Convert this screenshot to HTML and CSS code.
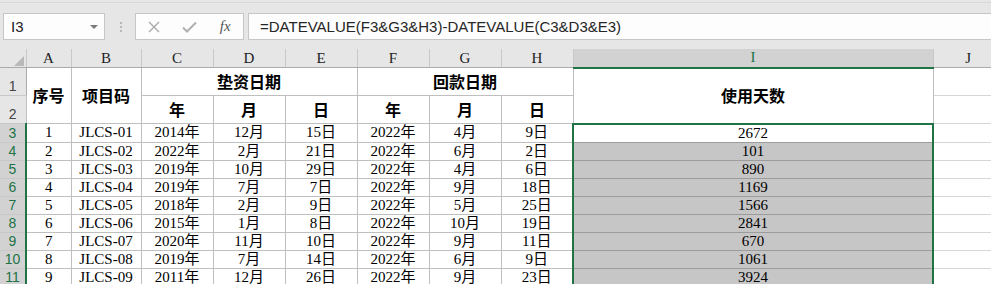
FILE: index.html
```html
<!DOCTYPE html>
<html lang="zh-CN">
<head>
  <meta charset="UTF-8" />
  <title>使用天数</title>
  <link rel="stylesheet" href="styles.css">
</head>
<body>
  <div class="toolbar">
    <div class="namebox">
      <span class="ref">I3</span>
      <span class="caret"></span>
    </div>
    <div class="grip"></div>
    <div class="fxbtns">
      <span class="btn">
        <svg width="12" height="12" viewBox="0 0 12 12"><path d="M1 1L11 11M11 1L1 11" stroke="#a8a8a8" stroke-width="1.3" fill="none"/></svg>
      </span>
      <span class="btn">
        <svg width="15" height="12" viewBox="0 0 15 12"><path d="M1 6.5L5 10.5L14 1.5" stroke="#b0b0b0" stroke-width="2" fill="none"/></svg>
      </span>
      <span class="btn fx">fx</span>
    </div>
    <div class="formula">=DATEVALUE(F3&amp;G3&amp;H3)-DATEVALUE(C3&amp;D3&amp;E3)</div>
  </div>

  <table class="sheet">
    <colgroup>
      <col class="c-rh"><col class="c-a"><col class="c-b">
      <col class="c-d"><col class="c-d"><col class="c-d">
      <col class="c-d"><col class="c-d"><col class="c-d">
      <col class="c-i"><col class="c-j">
    </colgroup>
    <thead>
      <tr>
        <th class="corner"><svg width="10" height="10" viewBox="0 0 10 10"><polygon points="10,0 10,10 0,10" fill="#b9b9b9"/></svg></th>
        <th>A</th><th>B</th><th>C</th><th>D</th><th>E</th>
        <th>F</th><th>G</th><th>H</th><th class="on">I</th><th class="last">J</th>
      </tr>
    </thead>
    <tbody>
      <tr class="tall">
        <th class="rh">1</th>
        <td class="hd" rowspan="2">序号</td>
        <td class="hd" rowspan="2">项目码</td>
        <td class="hd" colspan="3">垫资日期</td>
        <td class="hd" colspan="3">回款日期</td>
        <td class="hd" rowspan="2">使用天数</td>
        <td class="blank"></td>
      </tr>
      <tr class="tall">
        <th class="rh">2</th>
        <td class="hd">年</td><td class="hd">月</td><td class="hd">日</td>
        <td class="hd">年</td><td class="hd">月</td><td class="hd">日</td>
        <td class="blank"></td>
      </tr>
      <tr>
        <th class="rh on">3</th>
        <td>1</td><td>JLCS-01</td><td>2014年</td><td>12月</td><td>15日</td>
        <td>2022年</td><td>4月</td><td>9日</td>
        <td class="days active">2672</td><td class="blank"></td>
      </tr>
      <tr>
        <th class="rh on">4</th>
        <td>2</td><td>JLCS-02</td><td>2022年</td><td>2月</td><td>21日</td>
        <td>2022年</td><td>6月</td><td>2日</td>
        <td class="days">101</td><td class="blank"></td>
      </tr>
      <tr>
        <th class="rh on">5</th>
        <td>3</td><td>JLCS-03</td><td>2019年</td><td>10月</td><td>29日</td>
        <td>2022年</td><td>4月</td><td>6日</td>
        <td class="days">890</td><td class="blank"></td>
      </tr>
      <tr>
        <th class="rh on">6</th>
        <td>4</td><td>JLCS-04</td><td>2019年</td><td>7月</td><td>7日</td>
        <td>2022年</td><td>9月</td><td>18日</td>
        <td class="days">1169</td><td class="blank"></td>
      </tr>
      <tr>
        <th class="rh on">7</th>
        <td>5</td><td>JLCS-05</td><td>2018年</td><td>2月</td><td>9日</td>
        <td>2022年</td><td>5月</td><td>25日</td>
        <td class="days">1566</td><td class="blank"></td>
      </tr>
      <tr>
        <th class="rh on">8</th>
        <td>6</td><td>JLCS-06</td><td>2015年</td><td>1月</td><td>8日</td>
        <td>2022年</td><td>10月</td><td>19日</td>
        <td class="days">2841</td><td class="blank"></td>
      </tr>
      <tr>
        <th class="rh on">9</th>
        <td>7</td><td>JLCS-07</td><td>2020年</td><td>11月</td><td>10日</td>
        <td>2022年</td><td>9月</td><td>11日</td>
        <td class="days">670</td><td class="blank"></td>
      </tr>
      <tr>
        <th class="rh on">10</th>
        <td>8</td><td>JLCS-08</td><td>2019年</td><td>7月</td><td>14日</td>
        <td>2022年</td><td>6月</td><td>9日</td>
        <td class="days">1061</td><td class="blank"></td>
      </tr>
      <tr>
        <th class="rh on">11</th>
        <td>9</td><td>JLCS-09</td><td>2011年</td><td>12月</td><td>26日</td>
        <td>2022年</td><td>9月</td><td>23日</td>
        <td class="days">3924</td><td class="blank"></td>
      </tr>
    </tbody>
  </table>
</body>
</html>
```

FILE: styles.css
```css
body {
  margin: 0;
  width: 991px;
  height: 284px;
  overflow: hidden;
  background: #e6e6e6;
  font-family: "Liberation Sans", "Noto Sans CJK SC", sans-serif;
}

/* formula bar */
.toolbar {
  height: 47px;
  margin-top: 2px;
  border-top: 1px solid #d8d8d8;
  box-sizing: border-box;
  padding: 10px 0 0 3px;
  display: flex;
  align-items: flex-start;
}

.toolbar > div {
  flex: none;
}

.namebox {
  width: 102px;
  height: 27px;
  box-sizing: border-box;
  border: 1px solid #c6c6c6;
  background: #fdfdfd;
  display: flex;
  align-items: center;
  padding-left: 7px;
  position: relative;
}

.ref {
  font-size: 15px;
  color: #222;
}

.caret {
  position: absolute;
  right: 6px;
  top: 11px;
  border-left: 4px solid transparent;
  border-right: 4px solid transparent;
  border-top: 4px solid #7a7a7a;
}

.grip {
  width: 0;
  height: 10px;
  margin: 9px 0 0 15px;
  border-left: 2px dotted #b8b8b8;
}

.fxbtns {
  width: 109px;
  height: 27px;
  margin-left: 13px;
  box-sizing: border-box;
  border: 1px solid #c6c6c6;
  background: #fdfdfd;
  display: flex;
  align-items: center;
}

.btn {
  width: 36px;
  display: flex;
  justify-content: center;
  align-items: center;
}

.fx {
  font-family: "Liberation Serif", serif;
  font-style: italic;
  font-size: 15px;
  color: #555;
}

.toolbar > .formula {
  flex: 1;
  min-width: 0;
  height: 27px;
  margin-left: 4px;
  box-sizing: border-box;
  border: 1px solid #c6c6c6;
  border-right: none;
  background: #fdfdfd;
  padding-left: 11px;
  font-size: 15px;
  line-height: 25px;
  color: #262626;
  white-space: nowrap;
  overflow: hidden;
}

/* grid */
.sheet {
  border-collapse: collapse;
  table-layout: fixed;
  width: 991px;
  background: #fff;
  font-family: "Liberation Serif", "Noto Sans CJK SC", serif;
  font-size: 15px;
  color: #000;
}

.c-rh { width: 26px; }
.c-a { width: 45px; }
.c-b { width: 70px; }
.c-d { width: 72px; }
.c-i { width: 360px; }
.c-j { width: 58px; }

thead th {
  height: 17px;
  padding: 0;
  background: #e6e6e6;
  border-left: 1px solid #c8c8c8;
  border-right: 1px solid #c8c8c8;
  border-bottom: 1px solid #ababab;
  font-family: "Liberation Serif", serif;
  font-weight: normal;
  font-size: 15px;
  line-height: 17px;
  color: #222;
}

thead th.corner {
  border-left: none;
  text-align: right;
  vertical-align: bottom;
  padding: 0 2px 1px 0;
  line-height: 0;
}

thead th.on {
  background: #d2d2d2;
  color: #217346;
  border-bottom: 2px solid #217346;
}

thead th.last {
  border-right: none;
  padding-left: 12px;
}

.sheet td {
  height: 17px;
  padding: 0;
  border: 1px solid #bfbfbf;
  text-align: center;
  vertical-align: middle;
  line-height: 17px;
  white-space: nowrap;
}

.sheet tr.tall td,
.sheet tr.tall th {
  height: 27px;
}

.sheet td.hd {
  font-family: "Noto Sans CJK SC", sans-serif;
  font-size: 16px;
  font-weight: 700;
}

.sheet td.blank {
  border-color: #d6d6d6;
  border-right: none;
}

.rh {
  padding: 0;
  background: #e6e6e6;
  border-top: 1px solid #c8c8c8;
  border-bottom: 1px solid #c8c8c8;
  border-right: 1px solid #ababab;
  font-family: "Liberation Sans", sans-serif;
  font-weight: normal;
  font-size: 14px;
  line-height: 17px;
  color: #444;
  text-align: center;
  vertical-align: bottom;
}

.rh.on {
  background: #d2d2d2;
  color: #217346;
  border-right: 2px solid #217346;
}

/* selection I3:I11 */
.sheet td.days {
  background: #c6c6c6;
  border-top: 1px solid #9c9c9c;
  border-bottom: 1px solid #9c9c9c;
  border-left: 2px solid #217346;
  border-right: 2px solid #217346;
}

.sheet td.days.active {
  background: #fff;
  border-top: 2px solid #217346;
}
```
